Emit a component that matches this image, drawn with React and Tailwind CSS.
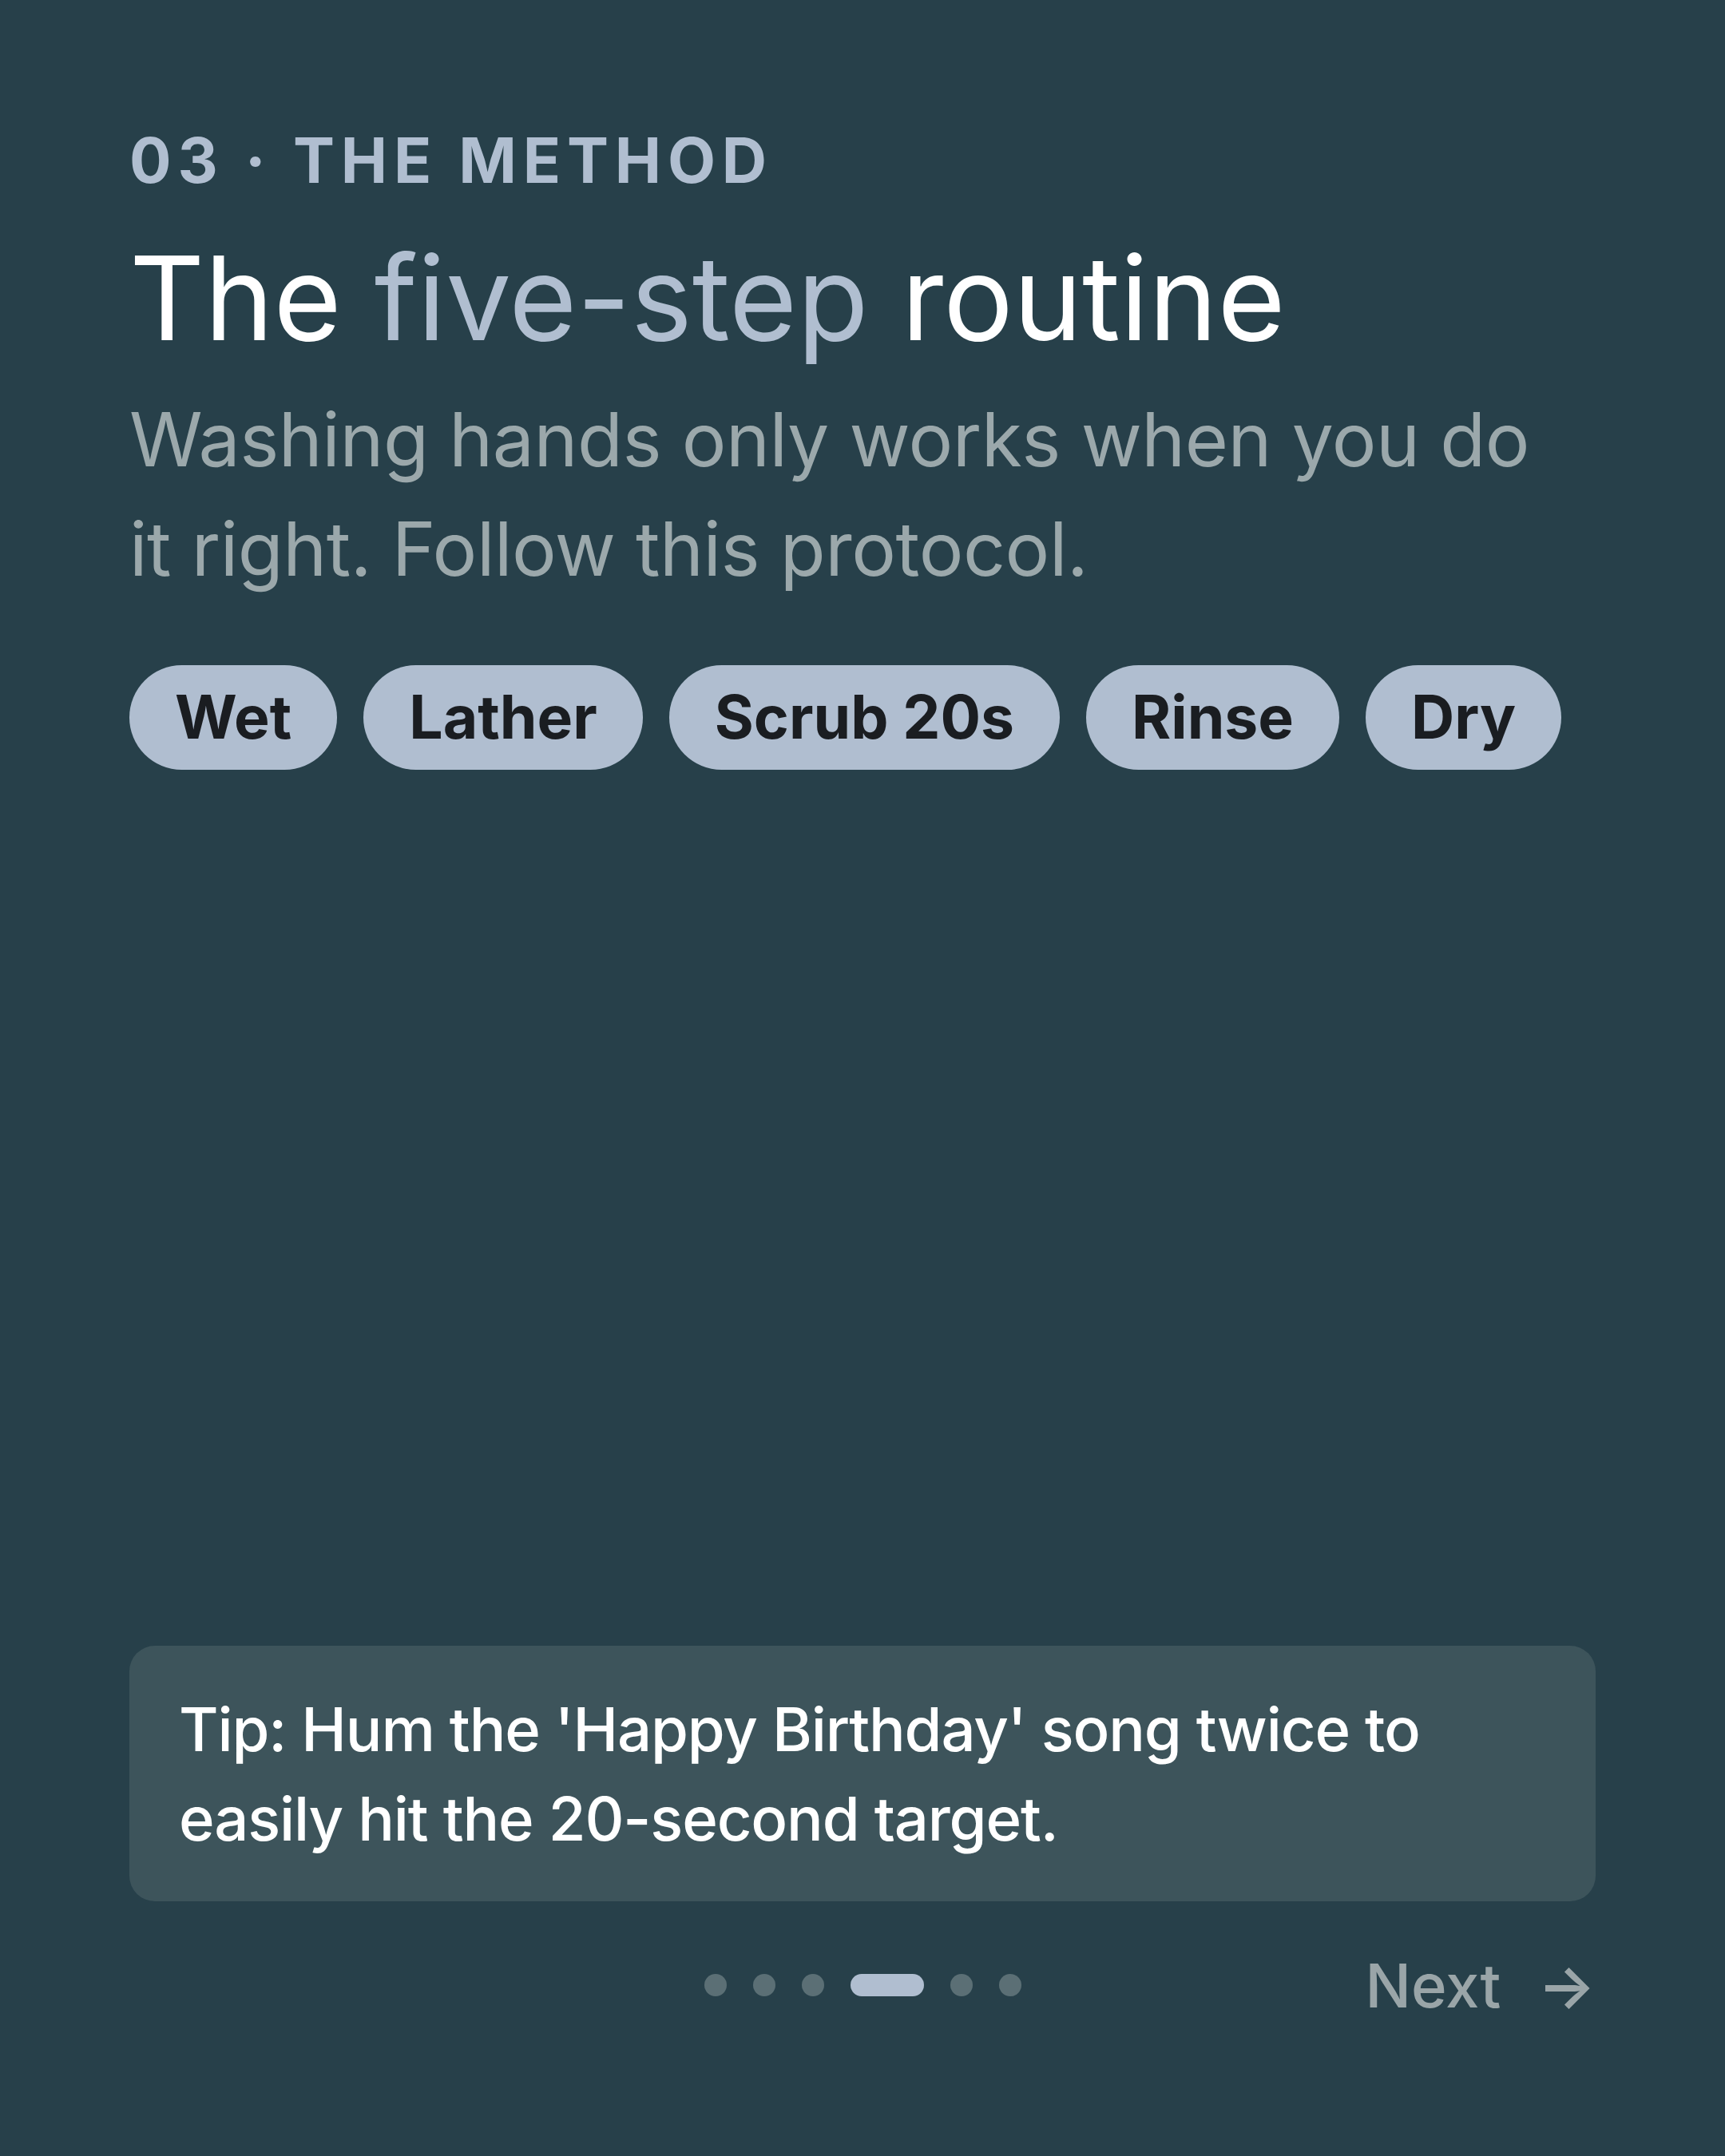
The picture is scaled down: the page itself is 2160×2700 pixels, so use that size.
const steps = ['Wet', 'Lather', 'Scrub 20s', 'Rinse', 'Dry'];

const App = () => {
  return (
    <div
      className="min-h-screen bg-[#27404a] p-[162px] flex flex-col"
      style={{ fontFamily: 'Inter, "Noto Sans", sans-serif' }}
    >
      {/* Header */}
      <p className="text-[78px] leading-none font-bold tracking-[0.1em] text-[#b0bed0]">
        03 · THE METHOD
      </p>
      <h1 className="mt-[53px] text-[146px] leading-[1.1] font-normal tracking-[0] text-white">
        The <span className="text-[#b0bed0]">five-step</span> routine
      </h1>
      <p className="mt-[28px] max-w-[1780px] text-[93px] leading-[137px] tracking-[-0.005em] text-[#9ba8ab]">
        Washing hands only works when you do it right. Follow this protocol.
      </p>

      {/* Step chips */}
      <div className="mt-[77px] flex flex-wrap gap-[33px]">
        {steps.map((s) => (
          <span
            key={s}
            className="h-[131px] px-[57px] rounded-full bg-[#b0bed0] text-[#1a1d21] text-[75px] font-bold flex items-center"
          >
            {s}
          </span>
        ))}
      </div>

      <div className="flex-1" />

      {/* Tip */}
      <div className="rounded-[32px] bg-[#3d545b] px-[62px] py-[48px]">
        <p className="text-[76px] leading-[112px] font-medium tracking-[-0.015em] text-white">
          Tip: Hum the 'Happy Birthday' song twice to easily hit the 20-second target.
        </p>
      </div>

      {/* Footer */}
      <div className="mt-[53px] grid grid-cols-3 items-center h-[104px]">
        <div />
        <div className="flex items-center justify-center gap-[33px]">
          <span className="w-[28px] h-[28px] rounded-full bg-[#5b6f75]" />
          <span className="w-[28px] h-[28px] rounded-full bg-[#5b6f75]" />
          <span className="w-[28px] h-[28px] rounded-full bg-[#5b6f75]" />
          <span className="w-[92px] h-[28px] rounded-full bg-[#b0bed0]" />
          <span className="w-[28px] h-[28px] rounded-full bg-[#5b6f75]" />
          <span className="w-[28px] h-[28px] rounded-full bg-[#5b6f75]" />
        </div>
        <div className="flex items-center justify-end gap-[46px] text-[#9aa5a8]">
          <span className="text-[76px] font-medium leading-none">Next</span>
          <span className="text-[76px] font-semibold leading-none">→</span>
        </div>
      </div>
    </div>
  );
};

export default App;
